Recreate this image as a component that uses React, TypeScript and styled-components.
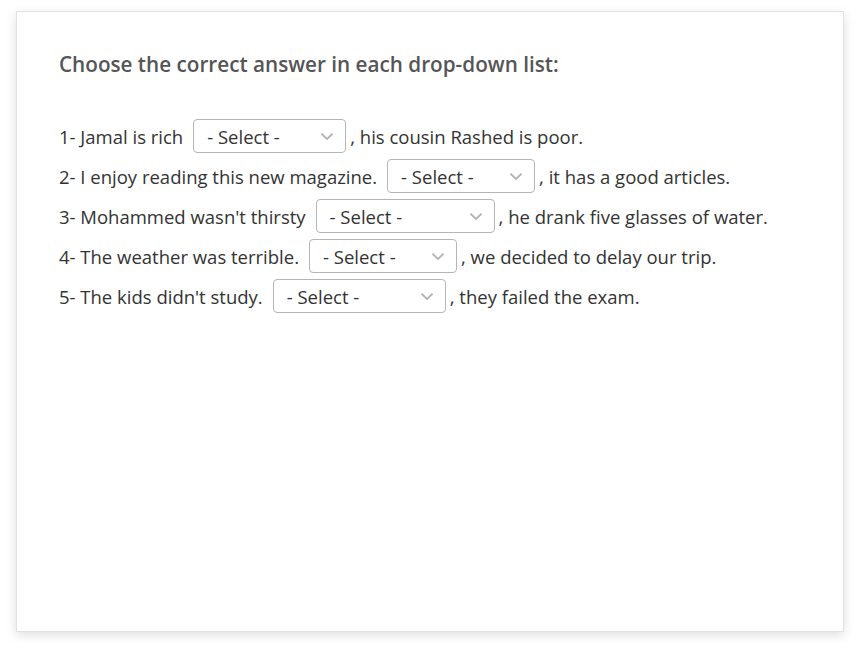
import React from "react";
import styled, { createGlobalStyle } from "styled-components";

const Global = createGlobalStyle`
  html, body { margin: 0; padding: 0; background: #ffffff; }
  body { font-family: "Open Sans", "Liberation Sans", sans-serif; }
`;

const Page = styled.div`
  padding: 11px 17px 22px 16px;
`;

const Card = styled.div`
  box-sizing: border-box;
  width: 828px;
  height: 621px;
  background: #fff;
  border: 1px solid #e2e2e2;
  box-shadow: 0 3px 10px rgba(0, 0, 0, 0.13);
  padding: 38px 42px;
`;

const Title = styled.h2`
  margin: 0 0 41px 0;
  font-size: 20.7px;
  font-weight: 600;
  color: #555;
  line-height: 28px;
`;

const Rows = styled.div`
  display: flex;
  flex-direction: column;
  gap: 6px;
`;

const Row = styled.div`
  display: flex;
  align-items: center;
  height: 34px;
  font-size: 18.5px;
  color: #333;
  white-space: pre;
`;

const SelectBox = styled.div<{ $w: number }>`
  box-sizing: border-box;
  width: ${(p) => p.$w}px;
  height: 34px;
  margin: 0 4px 0 10px;
  border: 1px solid #b5b5b5;
  border-radius: 4px;
  display: flex;
  align-items: center;
  justify-content: space-between;
  padding: 0 11px 0 13px;
  color: #333;
  font-size: 18.5px;
`;

const Chevron = () => (
  <svg width="14" height="9" viewBox="0 0 14 9" fill="none">
    <path d="M1.5 1.8 L7 7 L12.5 1.8" stroke="#b5b5b5" strokeWidth="1.9" />
  </svg>
);

const rows = [
  { pre: "1- Jamal is rich", post: ", his cousin Rashed is poor.", w: 153 },
  { pre: "2- I enjoy reading this new magazine.", post: ", it has a good articles.", w: 148 },
  { pre: "3- Mohammed wasn't thirsty", post: ", he drank five glasses of water.", w: 179 },
  { pre: "4- The weather was terrible.", post: ", we decided to delay our trip.", w: 148 },
  { pre: "5- The kids didn't study.", post: ", they failed the exam.", w: 173 },
];

export default function App() {
  return (
    <>
      <Global />
      <Page>
        <Card>
          <Title>Choose the correct answer in each drop-down list:</Title>
          <Rows>
            {rows.map((r, i) => (
              <Row key={i}>
                <span>{r.pre}</span>
                <SelectBox $w={r.w}>
                  <span>- Select -</span>
                  <Chevron />
                </SelectBox>
                <span>{r.post}</span>
              </Row>
            ))}
          </Rows>
        </Card>
      </Page>
    </>
  );
}
